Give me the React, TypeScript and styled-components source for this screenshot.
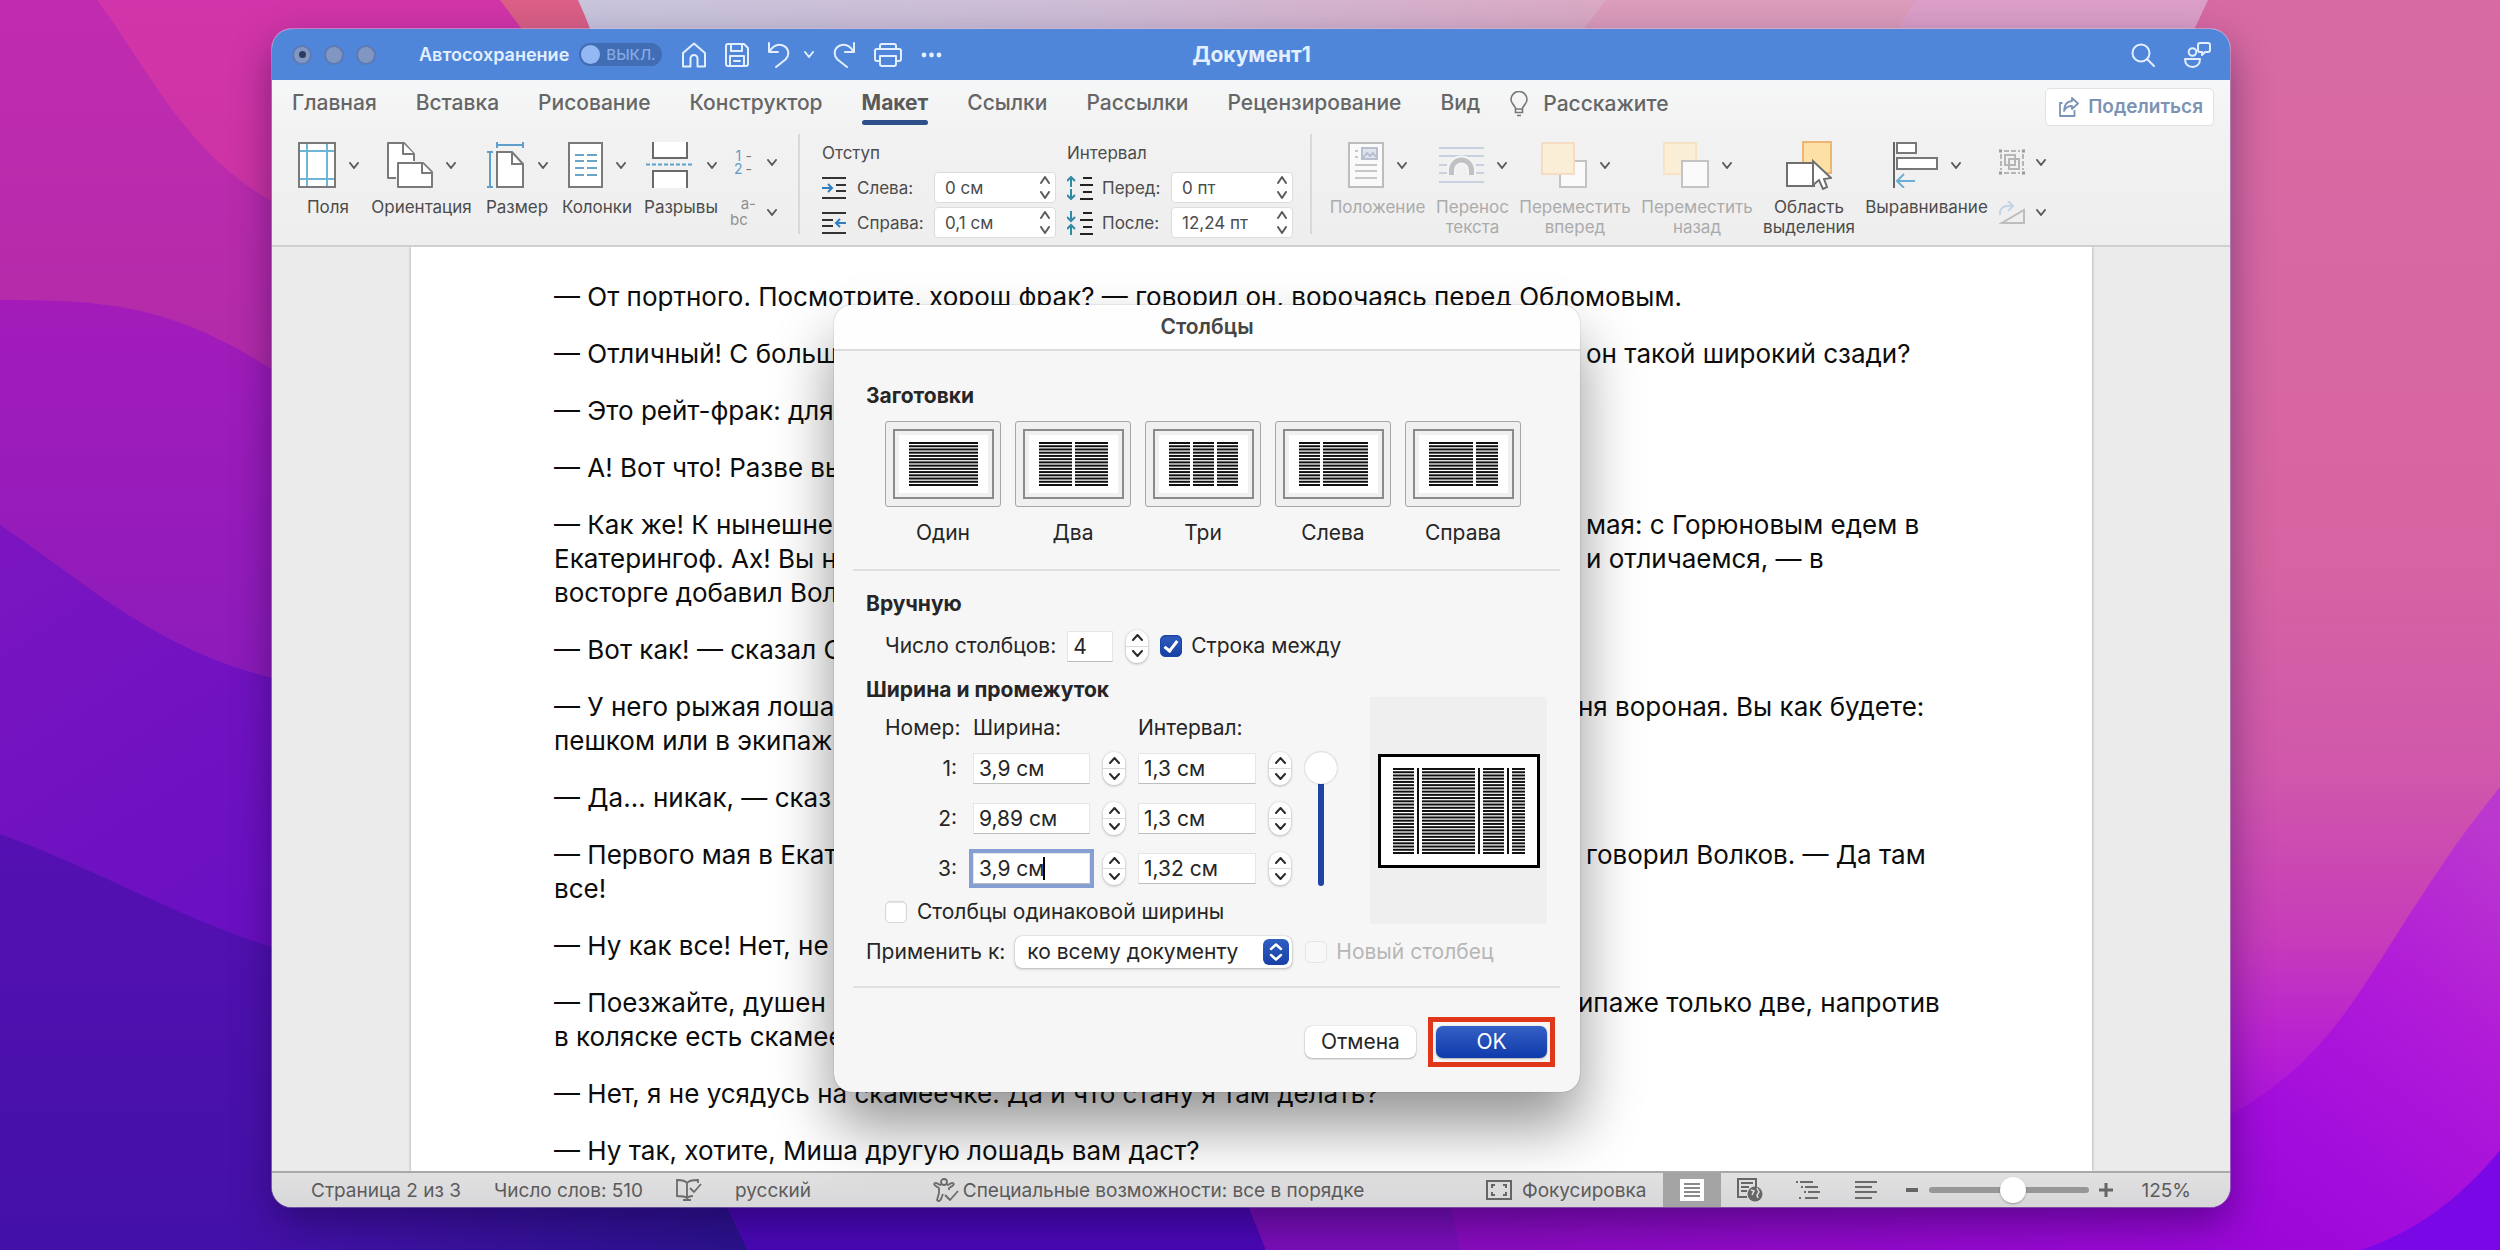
import React from 'react';
import styled, { createGlobalStyle, css } from 'styled-components';

const UI = `Inter, "Noto Sans", "Liberation Sans", sans-serif`;

const GlobalStyle = createGlobalStyle`
  *, *::before, *::after { box-sizing: border-box; }
  body { margin: 0; font-family: ${UI}; }
  button, input, select { font: inherit; color: inherit; margin: 0; }
  button { border: 0; padding: 0; background: none; cursor: default; }
  p, h1, h2, h3 { margin: 0; font-size: inherit; }
  svg { display: block; flex: none; }
`;

/* ---------- desktop ---------- */

const Desktop = styled.div`
  position: relative;
  display: flex;
  height: 100vh;
  min-height: 1200px;
  padding: 29px 270px 43px 272px;
  overflow: hidden;
`;

const WallpaperSvg = styled.svg`
  position: absolute;
  inset: 0;
  width: 100%;
  height: 100%;
`;

function Wallpaper() {
  return (
    <WallpaperSvg viewBox="0 0 2500 1250" preserveAspectRatio="none" aria-hidden="true">
      <defs>
        <linearGradient id="wRight" x1="0" y1="0" x2="0" y2="1">
          <stop offset="0" stopColor="#d86aa3" />
          <stop offset="0.45" stopColor="#d664a2" />
          <stop offset="0.62" stopColor="#d057ab" />
          <stop offset="0.75" stopColor="#c73cba" />
          <stop offset="0.84" stopColor="#b71fd2" />
          <stop offset="0.92" stopColor="#a30cde" />
          <stop offset="1" stopColor="#9c08d8" />
        </linearGradient>
        <linearGradient id="wRight2" x1="0.8" y1="0" x2="0.3" y2="1">
          <stop offset="0" stopColor="#bb38ce" />
          <stop offset="0.4" stopColor="#b01ad8" />
          <stop offset="0.8" stopColor="#a20cdc" />
          <stop offset="1" stopColor="#9c08d8" />
        </linearGradient>
        <linearGradient id="wPink" x1="0" y1="0" x2="0" y2="1">
          <stop offset="0" stopColor="#d235a9" />
          <stop offset="1" stopColor="#c8329f" />
        </linearGradient>
        <linearGradient id="wMag" x1="0" y1="0" x2="0" y2="1">
          <stop offset="0" stopColor="#c12bb0" />
          <stop offset="1" stopColor="#b02ba8" />
        </linearGradient>
        <linearGradient id="wViolet" x1="0" y1="0" x2="0" y2="1">
          <stop offset="0" stopColor="#a31cba" />
          <stop offset="1" stopColor="#8a1bba" />
        </linearGradient>
        <linearGradient id="wPurple" x1="0" y1="0" x2="0.4" y2="1">
          <stop offset="0" stopColor="#7b15c0" />
          <stop offset="1" stopColor="#6a10c2" />
        </linearGradient>
        <linearGradient id="wIndigo" x1="0" y1="0" x2="0" y2="1">
          <stop offset="0" stopColor="#5510b2" />
          <stop offset="1" stopColor="#4311a8" />
        </linearGradient>
        <linearGradient id="wDeep" x1="0" y1="0" x2="1" y2="0">
          <stop offset="0" stopColor="#4311a8" />
          <stop offset="1" stopColor="#2a128c" />
        </linearGradient>
        <linearGradient id="wBottom" x1="0" y1="0" x2="1" y2="0">
          <stop offset="0" stopColor="#8a0cbe" />
          <stop offset="1" stopColor="#9c08d8" />
        </linearGradient>
        <linearGradient id="wTop" x1="0" y1="0" x2="1" y2="0">
          <stop offset="0" stopColor="#c9c5dd" />
          <stop offset="0.5" stopColor="#cfbdd6" />
          <stop offset="1" stopColor="#dba9c4" />
        </linearGradient>
      </defs>
      <rect width="2500" height="1250" fill="url(#wRight)" />
      <path d="M2500 787C2440 860 2395 940 2357 996C2313 1060 2270 1100 2180 1140V1250H2500Z" fill="url(#wRight2)" />
      <path d="M2500 1150C2460 1200 2410 1235 2360 1250H2500Z" fill="#7a08e6" />
      <path d="M0 0H620V400H0Z" fill="url(#wPink)" />
      <path d="M500 0H585L620 80H560Q530 40 500 0Z" fill="#db5f86" />
      <path d="M578 0H1610L1570 60H600Q592 30 578 0Z" fill="url(#wTop)" />
      <path d="M1606 0H1925L1890 60H1560Z" fill="#dc9cbb" />
      <path d="M1915 0H2208L2180 60H1880Z" fill="#dc9fc9" />
      <path d="M0 0H97C150 70 190 165 290 210V420H0Z" fill="url(#wMag)" />
      <path d="M0 300C110 300 180 305 290 382V720H0Z" fill="url(#wViolet)" />
      <path d="M0 525C90 585 160 655 290 682V1000H0Z" fill="url(#wPurple)" />
      <path d="M0 834C100 870 180 920 290 953L700 1250H0Z" fill="url(#wIndigo)" />
      <path d="M290 1150H700L748 1250H290Z" fill="url(#wDeep)" />
      <path d="M700 1150H1230L1266 1250H748Z" fill="#4a08b6" />
      <path d="M1225 1150H1440L1460 1250H1266Z" fill="#7a0fb8" />
      <path d="M1440 1150H2220V1250H1460Z" fill="url(#wBottom)" />
    </WallpaperSvg>
  );
}

const WordWindow = styled.main`
  position: relative;
  display: flex;
  flex-direction: column;
  flex: 1;
  min-width: 0;
  border-radius: 20px;
  background: #ebebeb;
  box-shadow: 0 16px 40px rgba(20, 0, 60, 0.45), 0 0 0 1px rgba(230, 215, 245, 0.5);
`;

/* ---------- title bar ---------- */

const TitleBar = styled.header`
  display: grid;
  grid-template-columns: 1fr auto 1fr;
  align-items: center;
  height: 51px;
  padding: 0 19px 0 20px;
  border-radius: 20px 20px 0 0;
  background: #4f86d9;
  color: #e3efff;
`;

const TitleSide = styled.div<{ $end?: boolean }>`
  display: flex;
  align-items: center;
  justify-content: ${(p) => (p.$end ? 'flex-end' : 'flex-start')};
  gap: ${(p) => (p.$end ? '29px' : '20px')};
`;

const Lights = styled.div`
  display: flex;
  gap: 12px;
  margin-right: 23px;
`;

const Light = styled.button`
  display: grid;
  place-items: center;
  width: 20px;
  height: 20px;
  border: 2px solid #5c7ab4;
  border-radius: 50%;
  background: #8197c2;

  &:first-child::after {
    content: '';
    width: 7px;
    height: 7px;
    border-radius: 50%;
    background: #2b3c60;
  }
`;

const AutoSave = styled.label`
  display: flex;
  align-items: center;
  gap: 10px;
  font-size: 18px;
  font-weight: 600;
`;

const Switch = styled.span`
  display: flex;
  align-items: center;
  gap: 6px;
  width: 83px;
  height: 23px;
  padding-left: 2px;
  border-radius: 12px;
  background: #416db4;
  color: #86a9e4;
  font-size: 15px;
  font-weight: 500;
`;

const SwitchInput = styled.input`
  appearance: none;
  width: 19px;
  height: 19px;
  border-radius: 50%;
  background: #94b8f3;
`;

const DocTitle = styled.h1`
  font-size: 21px;
  line-height: 26px;
  font-weight: 700;
`;

const Tools = styled.div`
  display: flex;
  align-items: center;
  gap: 19px;
`;

const ToolPair = styled.div`
  display: flex;
  align-items: center;
  gap: 14px;
`;

const IconButton = styled.button`
  display: block;
  flex: none;
`;

/* ---------- ribbon ---------- */

const Ribbon = styled.section`
  height: 167px;
  border-bottom: 2px solid #cfcfcf;
  background: linear-gradient(#f6f7f8, #f2f2f2 30%, #eeeeee);
  color: #4c4c4c;
`;

const TabRow = styled.nav`
  display: flex;
  align-items: flex-start;
  height: 54px;
  padding: 0 16px 0 20px;
  font-size: 21px;
  line-height: 24px;
  font-weight: 500;
  color: #666;
`;

const Tabs = styled.div`
  display: flex;
  gap: 39px;
`;

const Tab = styled.button<{ $active?: boolean }>`
  padding-top: 11px;
  white-space: nowrap;

  &::after {
    content: '';
    display: block;
    height: 5px;
    margin-top: 5px;
    border-radius: 3px;
    background: ${(p) => (p.$active ? '#2d4f8a' : 'transparent')};
  }

  ${(p) =>
    p.$active &&
    css`
      color: #5a5a5a;
      font-weight: 700;
    `}
`;

const TellMe = styled.button`
  display: flex;
  align-items: center;
  gap: 15px;
  margin-left: 30px;
  padding-top: 11px;
`;

const Share = styled.button`
  display: flex;
  align-items: center;
  gap: 9px;
  height: 38px;
  margin: 8px 0 0 auto;
  padding: 0 10px 0 13px;
  border: 1px solid #e4dfe2;
  border-radius: 5px;
  background: #fff;
  color: #7c93b5;
  font-size: 19px;
  font-weight: 600;
`;

const Groups = styled.div`
  display: flex;
  align-items: flex-start;
  padding-left: 25px;
  font-size: 17px;
  line-height: 20px;
`;

const Group = styled.div`
  display: flex;
  align-items: flex-start;
  gap: 12px;
`;

const Divider = styled.div<{ $before: number; $after: number }>`
  flex: none;
  width: 2px;
  height: 100px;
  margin: 0 ${(p) => p.$after}px 0 ${(p) => p.$before}px;
  background: #d9d9d9;
`;

const BigTool = styled.button<{ $width: number; $dim?: boolean }>`
  display: flex;
  flex-direction: column;
  align-items: center;
  gap: 9px;
  width: ${(p) => p.$width}px;
  padding-top: 8px;
  color: ${(p) => (p.$dim ? '#ababab' : '#4c4c4c')};
`;

const IconRow = styled.span`
  display: flex;
  align-items: center;
  gap: 13px;
  height: 46px;
`;

const ToolLabel = styled.span`
  white-space: pre;
  text-align: center;
`;

const Stack = styled.div`
  display: grid;
  grid-auto-rows: 50px;
  align-items: center;
  padding-top: 3px;
`;

const StackTool = styled.button`
  display: grid;
  grid-template-columns: 26px 10px;
  align-items: center;
  justify-items: center;
  gap: 11px;
`;

const Spacing = styled.div`
  display: flex;
  gap: 11px;
  padding-top: 9px;
`;

const SpacingGroup = styled.div<{ $label: number }>`
  display: grid;
  grid-template-columns: 26px ${(p) => p.$label}px 122px;
  grid-template-rows: 25px;
  grid-auto-rows: 31px;
  column-gap: 9px;
  row-gap: 4px;
  align-items: center;
`;

const SpacingHead = styled.div`
  grid-column: 1 / -1;
  align-self: start;
`;

const SpinBox = styled.span`
  display: flex;
  align-items: center;
  height: 31px;
  padding-right: 5px;
  border: 1px solid #dcdcdc;
  border-radius: 4px;
  background: #fff;
`;

const SpinInput = styled.input`
  flex: 1;
  min-width: 0;
  padding: 0 0 0 10px;
  border: 0;
  background: none;
  outline: none;
`;

const SpinButtons = styled.span`
  display: grid;
  gap: 7px;
`;

/* ---------- document ---------- */

const Canvas = styled.section`
  flex: 1;
  min-height: 0;
  padding: 0 138px 0 139px;
  background: #ebebeb;
  overflow: hidden;
`;

const Page = styled.article`
  height: 100%;
  padding: 33px 0 0 143px;
  background: #fff;
  box-shadow: 0 0 3px rgba(0, 0, 0, 0.35);
  color: #0c0c0c;
  font-size: 26px;
  line-height: 34px;
  white-space: nowrap;

  p + p { margin-top: 23px; }
`;

const TextLine = styled.span<{ $cut?: boolean }>`
  display: grid;
  grid-template-columns: ${(p) => (p.$cut ? '1024px' : '1032px')} 1fr;
`;

/* ---------- status bar ---------- */

const StatusBar = styled.footer`
  display: flex;
  align-items: stretch;
  justify-content: space-between;
  height: 36px;
  padding: 0 39px;
  border-top: 2px solid #a9a9a9;
  border-radius: 0 0 20px 20px;
  background: linear-gradient(#e2e1e2, #d7d6d8);
  color: #5b5b5b;
  font-size: 19px;
  white-space: nowrap;
`;

const StatusPart = styled.div<{ $gap: number }>`
  display: flex;
  align-items: center;
  gap: ${(p) => p.$gap}px;
`;

const Views = styled.div`
  display: flex;
  align-self: stretch;
  align-items: center;
  margin: 0 0 0 7px;
`;

const ViewButton = styled.button<{ $active?: boolean }>`
  display: grid;
  place-items: center;
  align-self: stretch;
  width: 58px;
  background: ${(p) => (p.$active ? '#a5a4a5' : 'transparent')};
`;

const ZoomRange = styled.input`
  appearance: none;
  width: 160px;
  height: 25px;
  background: none;

  &::-webkit-slider-runnable-track {
    height: 6px;
    border-radius: 3px;
    background: #979797;
  }

  &::-webkit-slider-thumb {
    appearance: none;
    width: 26px;
    height: 26px;
    margin-top: -10px;
    border-radius: 50%;
    background: #fff;
    box-shadow: 0 1px 2px rgba(0, 0, 0, 0.3);
  }
`;

const ZoomValue = styled.span`
  margin-left: 18px;
`;

/* ---------- dialog ---------- */

const Dialog = styled.section`
  position: absolute;
  top: 276px;
  left: calc(50% - 417px);
  width: 746px;
  border-radius: 18px;
  background: #f6f6f6;
  box-shadow: 0 0 1px rgba(0, 0, 0, 0.6), 0 34px 60px rgba(0, 0, 0, 0.42);
  color: #262626;
  font-size: 21px;
  line-height: 24px;
`;

const DialogTitle = styled.h2`
  height: 46px;
  border-bottom: 2px solid #dcdcdc;
  border-radius: 18px 18px 0 0;
  background: #fefefe;
  color: #464646;
  font-weight: 600;
  line-height: 44px;
  text-align: center;
`;

const DialogBody = styled.form`
  padding: 33px 33px 25px 32px;
`;

const Heading = styled.h3`
  font-weight: 700;
`;

const Rule = styled.hr<{ $top: number; $bottom: number }>`
  height: 2px;
  margin: ${(p) => p.$top}px -13px ${(p) => p.$bottom}px;
  border: 0;
  background: #dfdfdf;
`;

const Presets = styled.div`
  display: grid;
  grid-template-columns: repeat(5, 116px);
  gap: 14px;
  margin: 13px 0 0 19px;
`;

const Preset = styled.button`
  display: grid;
  justify-items: center;
  gap: 14px;
`;

const PresetFrame = styled.span`
  display: grid;
  place-items: center;
  width: 116px;
  height: 86px;
  border: 1px solid #a6a6a6;
  border-radius: 3px;
  background: #f0f0f0;
`;

const PresetInner = styled.span`
  display: grid;
  place-items: center;
  width: 101px;
  height: 70px;
  border: 2px solid #8b8b8b;
  background: #fff;
  box-shadow: inset 0 0 0 4px #f0f0f0;
`;

const FormRow = styled.div<{ $top: number; $height: number; $indent?: boolean }>`
  display: flex;
  align-items: center;
  height: ${(p) => p.$height}px;
  margin-top: ${(p) => p.$top}px;
  padding-left: ${(p) => (p.$indent ? 19 : 0)}px;
`;

const TextField = styled.input<{ $focus?: boolean }>`
  display: block;
  width: 100%;
  height: 31px;
  padding: 0 0 0 5px;
  border: 1px solid #e6e6e6;
  border-bottom-color: #bdbdbd;
  background: #fff;
  outline: ${(p) => (p.$focus ? '4px solid #869fd3' : 'none')};
`;

const FieldWrap = styled.span`
  position: relative;
  display: block;
`;

const CountField = styled.span`
  width: 46px;
  margin: 0 13px 0 11px;
`;

const Caret = styled.span`
  position: absolute;
  top: 4px;
  left: 70px;
  width: 2px;
  height: 23px;
  background: #000;
`;

const StepperBox = styled.span`
  display: grid;
  grid-template-rows: 16px 16px;
  flex: none;
  width: 22px;
  height: 33px;
  border-radius: 11px;
  background: linear-gradient(#fff 16px, #d9d9d9 16px, #d9d9d9 17px, #fff 17px);
  box-shadow: 0 0 1px rgba(0, 0, 0, 0.3), 0 1px 3px rgba(0, 0, 0, 0.25);

  button { display: grid; place-items: center; }
`;

const CheckLabel = styled.label<{ $gap: number; $left?: number; $dim?: boolean }>`
  display: flex;
  align-items: center;
  gap: ${(p) => p.$gap}px;
  margin-left: ${(p) => p.$left ?? 0}px;
  color: ${(p) => (p.$dim ? '#b6b6b6' : 'inherit')};
  white-space: nowrap;
`;

const CheckBox = styled.input`
  appearance: none;
  display: grid;
  place-items: center;
  width: 22px;
  height: 22px;
  border: 1px solid #d6d6d6;
  border-radius: 5px;
  background: #fff;
  box-shadow: inset 0 1px 1px rgba(0, 0, 0, 0.12);

  &:checked {
    border-color: #1b45a6;
    background: linear-gradient(#2f5bbf, #1840a3);
  }

  &:checked::after {
    content: '';
    width: 8px;
    height: 14px;
    margin-top: -3px;
    border: solid #fff;
    border-width: 0 3px 3px 0;
    transform: rotate(38deg);
  }

  &:disabled {
    border-color: #e4e4e4;
    background: #f8f8f8;
    box-shadow: none;
  }
`;

const WidthSection = styled.div`
  display: flex;
  justify-content: space-between;
  align-items: flex-start;
  margin-top: 16px;
`;

const ColumnGrid = styled.div`
  display: grid;
  grid-template-columns: 75px 117px 22px 118px 22px 32px;
  grid-template-rows: 14px;
  grid-auto-rows: 33px;
  column-gap: 13px;
  row-gap: 17px;
  align-items: center;
  margin: 19px 0 15px 19px;
`;

const GridHead = styled.span<{ $span?: number }>`
  grid-column: span ${(p) => p.$span ?? 1};
  line-height: 14px;
`;

const RowNumber = styled.label`
  padding-right: 3px;
  text-align: right;
`;

const SpacingSlider = styled.input`
  grid-column: 6;
  grid-row: 2 / span 3;
  align-self: stretch;
  appearance: none;
  writing-mode: vertical-lr;
  width: 33px;
  height: 134px;
  background: none;

  &::-webkit-slider-runnable-track {
    width: 6px;
    border-radius: 3px;
    background: #1f44a6;
  }

  &::-webkit-slider-thumb {
    appearance: none;
    width: 32px;
    height: 32px;
    margin-left: -13px;
    border-radius: 50%;
    background: #fff;
    box-shadow: 0 0 2px rgba(0, 0, 0, 0.3);
  }
`;

const Preview = styled.div`
  display: grid;
  place-items: center;
  flex: none;
  width: 177px;
  height: 227px;
  margin-top: 19px;
  background: #efefef;
`;

const PreviewPage = styled.div`
  display: grid;
  place-items: center;
  width: 162px;
  height: 114px;
  border: 3px solid #000;
  background: #fff;
`;

const SelectWrap = styled.span`
  position: relative;
  display: block;
  width: 277px;
  margin-left: 10px;
`;

const Select = styled.select`
  appearance: none;
  width: 100%;
  height: 32px;
  padding: 0 34px 0 12px;
  border: 0;
  border-radius: 7px;
  background: #fff;
  box-shadow: 0 0 1px rgba(0, 0, 0, 0.35), 0 1px 3px rgba(0, 0, 0, 0.25);
`;

const SelectArrows = styled.span`
  position: absolute;
  top: 3px;
  right: 3px;
  display: grid;
  place-items: center;
  width: 26px;
  height: 26px;
  border-radius: 6px;
  background: linear-gradient(#2f5fc2, #1740a6);
  pointer-events: none;
`;

const Actions = styled.div`
  display: flex;
  justify-content: flex-end;
  align-items: center;
  gap: 12px;
  margin-right: -8px;
`;

const ActionButton = styled.button<{ $primary?: boolean }>`
  width: 111px;
  height: 32px;
  border-radius: 7px;
  background: ${(p) => (p.$primary ? 'linear-gradient(#3560c6, #0f3bab)' : '#fff')};
  color: ${(p) => (p.$primary ? '#fff' : '#262626')};
  box-shadow: 0 0 1px rgba(0, 0, 0, 0.35), 0 1px 2px rgba(0, 0, 0, 0.25);
`;

const Highlight = styled.span`
  display: block;
  padding: 4px 3px;
  border: 5px solid #e0371b;
  line-height: 0;

  button { line-height: 24px; }
`;

/* ---------- icons ---------- */

type ChevProps = { color?: string; up?: boolean; w?: number; h?: number; stroke?: number };

function Chevron({ color = '#5c5c5c', up, w = 10, h = 7, stroke = 2 }: ChevProps) {
  return (
    <svg width={w} height={h} viewBox={`0 0 ${w} ${h}`} fill="none" stroke={color} strokeWidth={stroke} strokeLinecap="round" strokeLinejoin="round">
      <path d={up ? `M1 ${h - 1}L${w / 2} 1L${w - 1} ${h - 1}` : `M1 1L${w / 2} ${h - 1}L${w - 1} 1`} />
    </svg>
  );
}

const Line = styled.svg`
  fill: none;
  stroke: #e3efff;
  stroke-width: 2;
  stroke-linejoin: round;
  stroke-linecap: round;
`;

const HomeIcon = () => (
  <Line width="24" height="26" viewBox="0 0 24 26"><path d="M1 11L12 1.500L23 11V24.500H15.500V16.500A3.500 3.500 0 0 0 8.500 16.500V24.500H1Z" /></Line>
);
const SaveIcon = () => (
  <Line width="24" height="24" viewBox="0 0 24 24"><path d="M1 3A2 2 0 0 1 3 1H19L23 5V21A2 2 0 0 1 21 23H3A2 2 0 0 1 1 21ZM6 1V8H17V1M5 23V13H19V23M9 18H15" /></Line>
);
const UndoIcon = () => (
  <Line width="22" height="26" viewBox="0 0 22 26"><path d="M1 1V10H10M1.500 9.500C5 4 10 1.500 15 3.500C21 6 22 13 17.500 17.500L8 25" /></Line>
);
const RedoIcon = () => (
  <Line width="22" height="26" viewBox="0 0 22 26"><path d="M21 1V10H12M20.500 9.500C17 4 12 1.500 7 3.500C1 6 0 13 4.500 17.500L14 25" /></Line>
);
const PrintIcon = () => (
  <Line width="28" height="24" viewBox="0 0 28 24"><path d="M6 6V3A2 2 0 0 1 8 1H20A2 2 0 0 1 22 3V6M6 18H3A2 2 0 0 1 1 16V8A2 2 0 0 1 3 6H25A2 2 0 0 1 27 8V16A2 2 0 0 1 25 18H22M6 13H22V21A2 2 0 0 1 20 23H8A2 2 0 0 1 6 21Z" /></Line>
);
const DotsIcon = () => (
  <svg width="21" height="6" viewBox="0 0 21 6" fill="#e3efff"><circle cx="3" cy="3" r="2.400" /><circle cx="10.500" cy="3" r="2.400" /><circle cx="18" cy="3" r="2.400" /></svg>
);
const SearchIcon = () => (
  <Line width="24" height="24" viewBox="0 0 24 24"><circle cx="10" cy="10" r="8.500" /><path d="M16.500 16.500L23 23" /></Line>
);
const PeopleIcon = () => (
  <Line width="27" height="26" viewBox="0 0 27 26"><circle cx="8.500" cy="10" r="3.800" /><path d="M1 17H16C16 22 13 25 8.500 25S1 22 1 17ZM16 1H24A2 2 0 0 1 26 3V8A2 2 0 0 1 24 10H21L18 13V10H16A2 2 0 0 1 14 8V3A2 2 0 0 1 16 1Z" /></Line>
);
const BulbIcon = () => (
  <svg width="18" height="26" viewBox="0 0 18 26" fill="none" stroke="#777" strokeWidth="1.600"><path d="M5.500 18C5.500 14.500 1 13 1 8.500A8 8 0 0 1 17 8.500C17 13 12.500 14.500 12.500 18ZM5.500 18V21.500H12.500V18M7 24.500H11" /></svg>
);
const ShareIcon = () => (
  <svg width="20" height="20" viewBox="0 0 20 20" fill="none" stroke="#7c93b5" strokeWidth="1.800" strokeLinejoin="round"><path d="M3.500 6H1V19H15.500V13M13 1L19 6.500L13 12V9C9 9 6.500 10.500 5 14C5 8 8 4.500 13 4Z" /></svg>
);

const MarginsIcon = () => (
  <svg width="38" height="46" viewBox="0 0 38 46" fill="none" strokeWidth="2"><path d="M1 1H37V45H1Z" fill="#fff" stroke="#7a7a7a" /><path d="M9 2V44M29 2V44M2 9H36M2 37H36" stroke="#6fb6d6" /></svg>
);
const OrientationIcon = () => (
  <svg width="46" height="46" viewBox="0 0 46 46" fill="#fff" stroke="#7a7a7a" strokeWidth="2" strokeLinejoin="round"><path d="M9 36H1V1H17L27 12V19" /><path d="M16 1V12H27" /><path d="M11 21H36L45 30V45H11Z" /><path d="M35 21V31H45" /></svg>
);
const SizeIcon = () => (
  <svg width="38" height="46" viewBox="0 0 38 46" fill="none" strokeWidth="2"><path d="M10 10H25L36 22V45H10Z" fill="#fff" stroke="#7a7a7a" /><path d="M25 10V22H36" stroke="#7a7a7a" /><path d="M10 3H36M10 0V6M36 0V6M3 10V45M0 10H6M0 45H6" stroke="#5f9fcb" /></svg>
);
const ColumnsIcon = () => (
  <svg width="35" height="46" viewBox="0 0 35 46" fill="none" strokeWidth="2"><path d="M1 1H34V45H1Z" fill="#fff" stroke="#7a7a7a" /><path d="M7 13H16M19 13H29M7 19H16M19 19H29M7 26H16M19 26H29M7 33H16M19 33H29" stroke="#6aa5c9" /></svg>
);
const BreaksIcon = () => (
  <svg width="48" height="46" viewBox="0 0 48 46" fill="#fff" strokeWidth="2"><path d="M7 0V16H41V0M7 46V29H41V46" stroke="#6a6a6a" /><path d="M0 22.500H48" stroke="#5f9fcb" strokeDasharray="4 2" /></svg>
);
const SmallText = styled.span`
  display: grid;
  grid-template-columns: auto auto;
  column-gap: 3px;
  color: #5d9cca;
  font-size: 14px;
  line-height: 13px;

  i { color: #777; font-style: normal; }
`;
const HyphenText = styled.span`
  display: grid;
  width: 26px;
  color: #8f8f8f;
  font-size: 15px;
  line-height: 16px;
  text-align: right;

  span + span { text-align: left; }
`;

const IndentIcon = ({ right }: { right?: boolean }) => (
  <svg width="24" height="22" viewBox="0 0 24 22" fill="none" strokeWidth="2"><path d={right ? 'M0 1H24M0 8H11M0 14H11M0 21H24' : 'M0 1H24M14 8H24M14 14H24M0 21H24'} stroke="#333" /><path d={right ? 'M24 11H14M18 7L14 11L18 15' : 'M0 11H10M6 7L10 11L6 15'} stroke="#2f7fc0" /></svg>
);
const GapIcon = ({ after }: { after?: boolean }) => (
  <svg width="27" height="24" viewBox="0 0 27 24" fill="none" strokeWidth="2"><path d="M16 2H25M13 9H26M16 16H25M13 23H26" stroke="#222" /><path d={after ? 'M4 0V10M0 6L4 10L8 6M4 24V14M0 18L4 14L8 18' : 'M4 11V1M0 5L4 1L8 5M4 13V23M0 19L4 23L8 19'} stroke="#2f8aa8" /></svg>
);

const PositionIcon = () => (
  <svg width="36" height="46" viewBox="0 0 36 46" fill="none" strokeWidth="2"><path d="M1 1H35V45H1Z" fill="#fafafa" stroke="#bdbdbd" /><path d="M14 6H29V17H14Z" fill="#dfe3ee" stroke="#b9bfd0" /><path d="M15 16L19 11L22 14L25 11L28 15" stroke="#b9bfd0" /><path d="M7 9H10M7 15H10M7 23H29M7 29H29M7 36H29" stroke="#c8c8c8" /></svg>
);
const WrapIcon = () => (
  <svg width="45" height="36" viewBox="0 0 45 36" fill="none"><path d="M0 1H45M0 9H45M0 18H8M37 18H45M0 26H8M37 26H45M0 35H45" stroke="#c9d1e0" strokeWidth="2" /><path d="M12.500 28V23A10 10 0 0 1 32.500 23V28" stroke="#f4f4f4" strokeWidth="9" /><path d="M12.500 28V23A10 10 0 0 1 32.500 23V28" stroke="#c0c0c5" strokeWidth="5" /></svg>
);
const ForwardIcon = () => (
  <svg width="46" height="46" viewBox="0 0 46 46" strokeWidth="2"><path d="M19 19H45V45H19Z" fill="#fafafa" stroke="#c3c3c3" /><path d="M1 1H33V32H1Z" fill="#fbeed6" stroke="#f6dcc2" /></svg>
);
const BackIcon = () => (
  <svg width="46" height="46" viewBox="0 0 46 46" strokeWidth="2"><path d="M1 1H33V32H1Z" fill="#fbeed6" stroke="#f6e2c4" /><path d="M19 19H45V45H19Z" fill="#fafafa" stroke="#c3c3c3" /></svg>
);
const SelectionIcon = () => (
  <svg width="46" height="49" viewBox="0 0 46 49" strokeWidth="2"><path d="M17 1H45V32H17Z" fill="#fde0a6" stroke="#efb573" /><path d="M1 22H28V45H1Z" fill="#fff" stroke="#6f6f6f" /><path d="M27 20V44L33 39L37 48L41 46L38 38L45 37Z" fill="#fff" stroke="#6f6f6f" /></svg>
);
const AlignIcon = () => (
  <svg width="45" height="46" viewBox="0 0 45 46" fill="none" strokeWidth="2"><path d="M1 0V46" stroke="#666" /><path d="M4 1H23V11H4ZM4 16H44V27H4Z" fill="#fff" stroke="#777" /><path d="M22 39H5M11 32L4 39L11 46" stroke="#6aaed6" /></svg>
);
const GroupIcon = () => (
  <svg width="26" height="26" viewBox="0 0 26 26" fill="none" stroke="#b5b5b5" strokeWidth="2"><path d="M5 2H21M5 24H21M2 5V21M24 5V21" strokeDasharray="5 2" /><path d="M6 6H16V16H6ZM10 10H20V20H10Z" /><path d="M0 2H3M23 2H26M0 24H3M23 24H26" stroke="#9a9a9a" strokeWidth="3" /></svg>
);
const RotateIcon = () => (
  <svg width="26" height="23" viewBox="0 0 26 23" fill="none" strokeWidth="2"><path d="M3 22H25V9Z" stroke="#bdbdbd" /><path d="M1 14C0 7 5 4 13 5M9 0L14 5L9 10" stroke="#c3d4e4" /></svg>
);

const BookIcon = () => (
  <svg width="26" height="22" viewBox="0 0 26 22" fill="none" stroke="#6b6b6b" strokeWidth="1.800"><path d="M11 4C9 1 4 1 1 1V17C5 17 9 17 11 19V4C13 1 18 1 22 1V4M11 19C13 17 15 17 17 17M7 21H15" /><path d="M14 9L18 13L25 5" /></svg>
);
const AccessIcon = () => (
  <svg width="26" height="24" viewBox="0 0 26 24" fill="none" stroke="#6b6b6b" strokeWidth="1.800" strokeLinejoin="round"><circle cx="11" cy="4" r="3" /><path d="M8 7C5 7 4 4 2 5S2 8 6 10V15L4 22C6 24 7 23 8 21L10 16M14 7C17 7 18 4 20 5S20 8 16 10V12" /><path d="M12 17L17 22L25 13" /></svg>
);
const FocusIcon = () => (
  <svg width="26" height="20" viewBox="0 0 26 20" fill="none" stroke="#666" strokeWidth="2"><path d="M1 1H25V19H1Z" /><path d="M6 8V5H9M17 5H20V8M20 12V15H17M9 15H6V12" /></svg>
);
const PrintViewIcon = () => (
  <svg width="24" height="22" viewBox="0 0 24 22" fill="none" strokeWidth="2"><path d="M1 1H23V21H1Z" fill="#fff" stroke="#fff" /><path d="M4 5H20M4 9H20M4 13H20M4 17H20" stroke="#8a8a8a" /></svg>
);
const WebViewIcon = () => (
  <svg width="26" height="24" viewBox="0 0 26 24" fill="none" stroke="#666" strokeWidth="2"><path d="M10 19H1V1H19V9M4 5H16M4 9H12M4 13H10" /><circle cx="18" cy="16" r="7.500" fill="#666" stroke="none" /><path d="M14 12L17 13L15 17M20 10L22 14L20 17L21 20" stroke="#dcdcdc" strokeWidth="1.500" /></svg>
);
const OutlineIcon = () => (
  <svg width="24" height="18" viewBox="0 0 24 18" stroke="#6b6b6b" strokeWidth="2"><path d="M0 1H2M4 1H17M5 6H7M9 6H22M8 11H10M12 11H24M3 17H5M9 17H22" /></svg>
);
const DraftIcon = () => (
  <svg width="23" height="18" viewBox="0 0 23 18" stroke="#6b6b6b" strokeWidth="2"><path d="M0 1H22M0 6H17M0 11H22M0 17H17" /></svg>
);
const MinusIcon = () => (
  <svg width="14" height="14" viewBox="0 0 14 14" stroke="#666" strokeWidth="4"><path d="M1 7H13" /></svg>
);
const PlusIcon = () => (
  <svg width="14" height="14" viewBox="0 0 14 14" stroke="#666" strokeWidth="3"><path d="M0 7H14M7 0V14" /></svg>
);

/* Striped text columns: rows of bars for each column, with optional vertical rules. */
function Stripes({ cols, rules = [], height, rows, width }: { cols: [number, number][]; rules?: number[]; height: number; rows: number; width: number }) {
  const step = (height - 2) / (rows - 1);
  const ys = Array.from({ length: rows }, (_, i) => i * step);
  return (
    <svg width={width} height={height} viewBox={`0 0 ${width} ${height}`} fill="#111">
      {cols.map(([x, w]) => ys.map((y) => <rect key={`${x}-${y}`} x={x} y={y} width={w} height="2" />))}
      {rules.map((x) => <rect key={x} x={x} y="0" width="2" height={height} />)}
    </svg>
  );
}

/* ---------- pieces ---------- */

function Stepper({ name }: { name: string }) {
  return (
    <StepperBox>
      <button type="button" aria-label={`${name}: больше`}><Chevron color="#2b2b2b" up w={11} h={7} /></button>
      <button type="button" aria-label={`${name}: меньше`}><Chevron color="#2b2b2b" w={11} h={7} /></button>
    </StepperBox>
  );
}

function Spin({ id, value }: { id: string; value: string }) {
  return (
    <SpinBox>
      <SpinInput id={id} defaultValue={value} />
      <SpinButtons>
        <IconButton type="button" aria-label="Больше"><Chevron up w={10} h={8} /></IconButton>
        <IconButton type="button" aria-label="Меньше"><Chevron w={10} h={8} /></IconButton>
      </SpinButtons>
    </SpinBox>
  );
}

type ToolDef = { label: string; icon: React.ReactNode; width: number; dim?: boolean; plain?: boolean };

const pageTools: ToolDef[] = [
  { label: 'Поля', icon: <MarginsIcon />, width: 62 },
  { label: 'Ориентация', icon: <OrientationIcon />, width: 101 },
  { label: 'Размер', icon: <SizeIcon />, width: 66 },
  { label: 'Колонки', icon: <ColumnsIcon />, width: 70 },
  { label: 'Разрывы', icon: <BreaksIcon />, width: 74 },
];

const arrangeTools: ToolDef[] = [
  { label: 'Положение', icon: <PositionIcon />, width: 95, dim: true },
  { label: 'Перенос\nтекста', icon: <WrapIcon />, width: 71, dim: true },
  { label: 'Переместить\nвперед', icon: <ForwardIcon />, width: 110, dim: true },
  { label: 'Переместить\nназад', icon: <BackIcon />, width: 110, dim: true },
  { label: 'Область\nвыделения', icon: <SelectionIcon />, width: 90, plain: true },
  { label: 'Выравнивание', icon: <AlignIcon />, width: 121 },
];

function RibbonTool({ label, icon, width, dim, plain }: ToolDef) {
  return (
    <BigTool type="button" $width={width} $dim={dim}>
      <IconRow>{icon}{!plain && <Chevron />}</IconRow>
      <ToolLabel>{label}</ToolLabel>
    </BigTool>
  );
}

const tabs = ['Главная', 'Вставка', 'Рисование', 'Конструктор', 'Макет', 'Ссылки', 'Рассылки', 'Рецензирование', 'Вид'];

/* Each paragraph is a list of lines; a line has the part left of the dialog and, if any,
   the part right of it. The third value marks a right part whose first letter the dialog cuts. */
type TextParts = [string, string?, boolean?];

const paragraphs: TextParts[][] = [
  [['— От портного. Посмотрите, хорош фрак? — говорил он, ворочаясь перед Обломовым.']],
  [['— Отличный! С больш', 'он такой широкий сзади?']],
  [['— Это рейт-фрак: для']],
  [['— А! Вот что! Разве вы']],
  [['— Как же! К нынешне', 'мая: с Горюновым едем в'], ['Екатерингоф. Ах! Вы н', 'и отличаемся, — в'], ['восторге добавил Вол']],
  [['— Вот как! — сказал О']],
  [['— У него рыжая лоша', 'ня вороная. Вы как будете:', true], ['пешком или в экипаж']],
  [['— Да… никак, — сказ']],
  [['— Первого мая в Екат', 'говорил Волков. — Да там'], ['все!']],
  [['— Ну как все! Нет, не']],
  [['— Поезжайте, душен', 'ипаже только две, напротив', true], ['в коляске есть скамее']],
  [['— Нет, я не усядусь на скамеечке. Да и что стану я там делать?']],
  [['— Ну так, хотите, Миша другую лошадь вам даст?']],
];

const presets: { label: string; cols: [number, number][] }[] = [
  { label: 'Один', cols: [[0, 69]] },
  { label: 'Два', cols: [[0, 33], [36, 33]] },
  { label: 'Три', cols: [[0, 21], [24, 21], [48, 21]] },
  { label: 'Слева', cols: [[0, 21], [24, 45]] },
  { label: 'Справа', cols: [[0, 44], [47, 22]] },
];

const columnRows = [
  { n: '1', width: '3,9 см', gap: '1,3 см' },
  { n: '2', width: '9,89 см', gap: '1,3 см' },
  { n: '3', width: '3,9 см', gap: '1,32 см', focus: true },
];

function ColumnsDialog() {
  return (
    <Dialog role="dialog" aria-labelledby="dlg-title">
      <DialogTitle id="dlg-title">Столбцы</DialogTitle>
      <DialogBody onSubmit={(e) => e.preventDefault()}>
        <Heading>Заготовки</Heading>
        <Presets>
          {presets.map((p) => (
            <Preset key={p.label} type="button">
              <PresetFrame><PresetInner><Stripes cols={p.cols} width={69} height={44} rows={14} /></PresetInner></PresetFrame>
              {p.label}
            </Preset>
          ))}
        </Presets>
        <Rule $top={24} $bottom={21} />
        <Heading>Вручную</Heading>
        <FormRow $top={14} $height={32} $indent>
          <label htmlFor="count">Число столбцов:</label>
          <CountField><TextField id="count" defaultValue="4" /></CountField>
          <Stepper name="Число столбцов" />
          <CheckLabel $gap={9} $left={12}><CheckBox type="checkbox" defaultChecked />Строка между</CheckLabel>
        </FormRow>
        <WidthSection>
          <div>
            <Heading>Ширина и промежуток</Heading>
            <ColumnGrid>
              <GridHead>Номер:</GridHead>
              <GridHead $span={2}>Ширина:</GridHead>
              <GridHead $span={3}>Интервал:</GridHead>
              {columnRows.map((r) => (
                <React.Fragment key={r.n}>
                  <RowNumber htmlFor={`w${r.n}`}>{r.n}:</RowNumber>
                  <FieldWrap>
                    <TextField id={`w${r.n}`} defaultValue={r.width} $focus={r.focus} />
                    {r.focus && <Caret />}
                  </FieldWrap>
                  <Stepper name={`Ширина ${r.n}`} />
                  <TextField aria-label={`Интервал ${r.n}`} defaultValue={r.gap} />
                  <Stepper name={`Интервал ${r.n}`} />
                </React.Fragment>
              ))}
              <SpacingSlider type="range" aria-label="Прокрутка столбцов" min="0" max="10" defaultValue="0" />
            </ColumnGrid>
            <CheckLabel $gap={10} $left={19}><CheckBox type="checkbox" />Столбцы одинаковой ширины</CheckLabel>
          </div>
          <Preview>
            <PreviewPage>
              <Stripes width={132} height={86} rows={27} cols={[[0, 21], [29, 53], [90, 21], [119, 13]]} rules={[24, 85, 114]} />
            </PreviewPage>
          </Preview>
        </WidthSection>
        <FormRow $top={12} $height={32}>
          <label htmlFor="apply">Применить к:</label>
          <SelectWrap>
            <Select id="apply"><option>ко всему документу</option></Select>
            <SelectArrows>
              <svg width="14" height="18" viewBox="0 0 14 18" fill="none" stroke="#fff" strokeWidth="2.400" strokeLinecap="round" strokeLinejoin="round"><path d="M2 6L7 1.500L12 6M2 12L7 16.500L12 12" /></svg>
            </SelectArrows>
          </SelectWrap>
          <CheckLabel $gap={9} $left={13} $dim><CheckBox type="checkbox" disabled />Новый столбец</CheckLabel>
        </FormRow>
        <Rule $top={18} $bottom={29} />
        <Actions>
          <ActionButton type="button">Отмена</ActionButton>
          <Highlight><ActionButton type="submit" $primary>OK</ActionButton></Highlight>
        </Actions>
      </DialogBody>
    </Dialog>
  );
}

export default function App() {
  return (
    <Desktop>
      <GlobalStyle />
      <Wallpaper />
      <WordWindow>
        <TitleBar>
          <TitleSide>
            <Lights>
              <Light aria-label="Закрыть" /><Light aria-label="Свернуть" /><Light aria-label="Развернуть" />
            </Lights>
            <AutoSave>
              Автосохранение
              <Switch><SwitchInput type="checkbox" />ВЫКЛ.</Switch>
            </AutoSave>
            <Tools>
              <IconButton aria-label="Главная"><HomeIcon /></IconButton>
              <IconButton aria-label="Сохранить"><SaveIcon /></IconButton>
              <ToolPair>
                <IconButton aria-label="Отменить"><UndoIcon /></IconButton>
                <IconButton aria-label="История"><Chevron color="#e3efff" /></IconButton>
              </ToolPair>
              <IconButton aria-label="Повторить"><RedoIcon /></IconButton>
              <IconButton aria-label="Печать"><PrintIcon /></IconButton>
              <IconButton aria-label="Ещё"><DotsIcon /></IconButton>
            </Tools>
          </TitleSide>
          <DocTitle>Документ1</DocTitle>
          <TitleSide $end>
            <IconButton aria-label="Поиск"><SearchIcon /></IconButton>
            <IconButton aria-label="Участники"><PeopleIcon /></IconButton>
          </TitleSide>
        </TitleBar>

        <Ribbon>
          <TabRow>
            <Tabs>
              {tabs.map((t) => <Tab key={t} type="button" $active={t === 'Макет'}>{t}</Tab>)}
            </Tabs>
            <TellMe type="button"><BulbIcon />Расскажите</TellMe>
            <Share type="button"><ShareIcon />Поделиться</Share>
          </TabRow>
          <Groups>
            <Group>
              {pageTools.map((t) => <RibbonTool key={t.label} {...t} />)}
              <Stack>
                <StackTool type="button" aria-label="Номера строк">
                  <SmallText><span>1</span><i>-</i><span>2</span><i>-</i></SmallText><Chevron />
                </StackTool>
                <StackTool type="button" aria-label="Расстановка переносов">
                  <HyphenText><span>a-</span><span>bc</span></HyphenText><Chevron />
                </StackTool>
              </Stack>
            </Group>
            <Divider $before={21} $after={22} />
            <Spacing>
              <SpacingGroup $label={68}>
                <SpacingHead>Отступ</SpacingHead>
                <IndentIcon /><label htmlFor="left">Слева:</label><Spin id="left" value="0 см" />
                <IndentIcon right /><label htmlFor="right">Справа:</label><Spin id="right" value="0,1 см" />
              </SpacingGroup>
              <SpacingGroup $label={60}>
                <SpacingHead>Интервал</SpacingHead>
                <GapIcon /><label htmlFor="before">Перед:</label><Spin id="before" value="0 пт" />
                <GapIcon after /><label htmlFor="after">После:</label><Spin id="after" value="12,24 пт" />
              </SpacingGroup>
            </Spacing>
            <Divider $before={17} $after={18} />
            <Group>
              {arrangeTools.map((t) => <RibbonTool key={t.label} {...t} />)}
              <Stack>
                <StackTool type="button" aria-label="Группировать"><GroupIcon /><Chevron /></StackTool>
                <StackTool type="button" aria-label="Повернуть"><RotateIcon /><Chevron /></StackTool>
              </Stack>
            </Group>
          </Groups>
        </Ribbon>

        <Canvas>
          <Page>
            {paragraphs.map((lines) => (
              <p key={lines[0][0]}>
                {lines.map(([head, tail, cut]) => (
                  <TextLine key={head} $cut={cut}><span>{head}</span>{tail && <span>{tail}</span>}</TextLine>
                ))}
              </p>
            ))}
          </Page>
        </Canvas>

        <StatusBar>
          <StatusPart $gap={33}>
            <span>Страница 2 из 3</span>
            <span>Число слов: 510</span>
            <BookIcon />
            <span>русский</span>
          </StatusPart>
          <StatusPart $gap={4}>
            <AccessIcon />
            <span>Специальные возможности: все в порядке</span>
          </StatusPart>
          <StatusPart $gap={10}>
            <FocusIcon />
            <span>Фокусировка</span>
            <Views>
              <ViewButton $active aria-label="Разметка страницы"><PrintViewIcon /></ViewButton>
              <ViewButton aria-label="Веб-документ"><WebViewIcon /></ViewButton>
              <ViewButton aria-label="Структура"><OutlineIcon /></ViewButton>
              <ViewButton aria-label="Черновик"><DraftIcon /></ViewButton>
            </Views>
            <IconButton aria-label="Уменьшить"><MinusIcon /></IconButton>
            <ZoomRange type="range" aria-label="Масштаб" min="0" max="100" defaultValue="53" />
            <IconButton aria-label="Увеличить"><PlusIcon /></IconButton>
            <ZoomValue>125%</ZoomValue>
          </StatusPart>
        </StatusBar>

        <ColumnsDialog />
      </WordWindow>
    </Desktop>
  );
}
